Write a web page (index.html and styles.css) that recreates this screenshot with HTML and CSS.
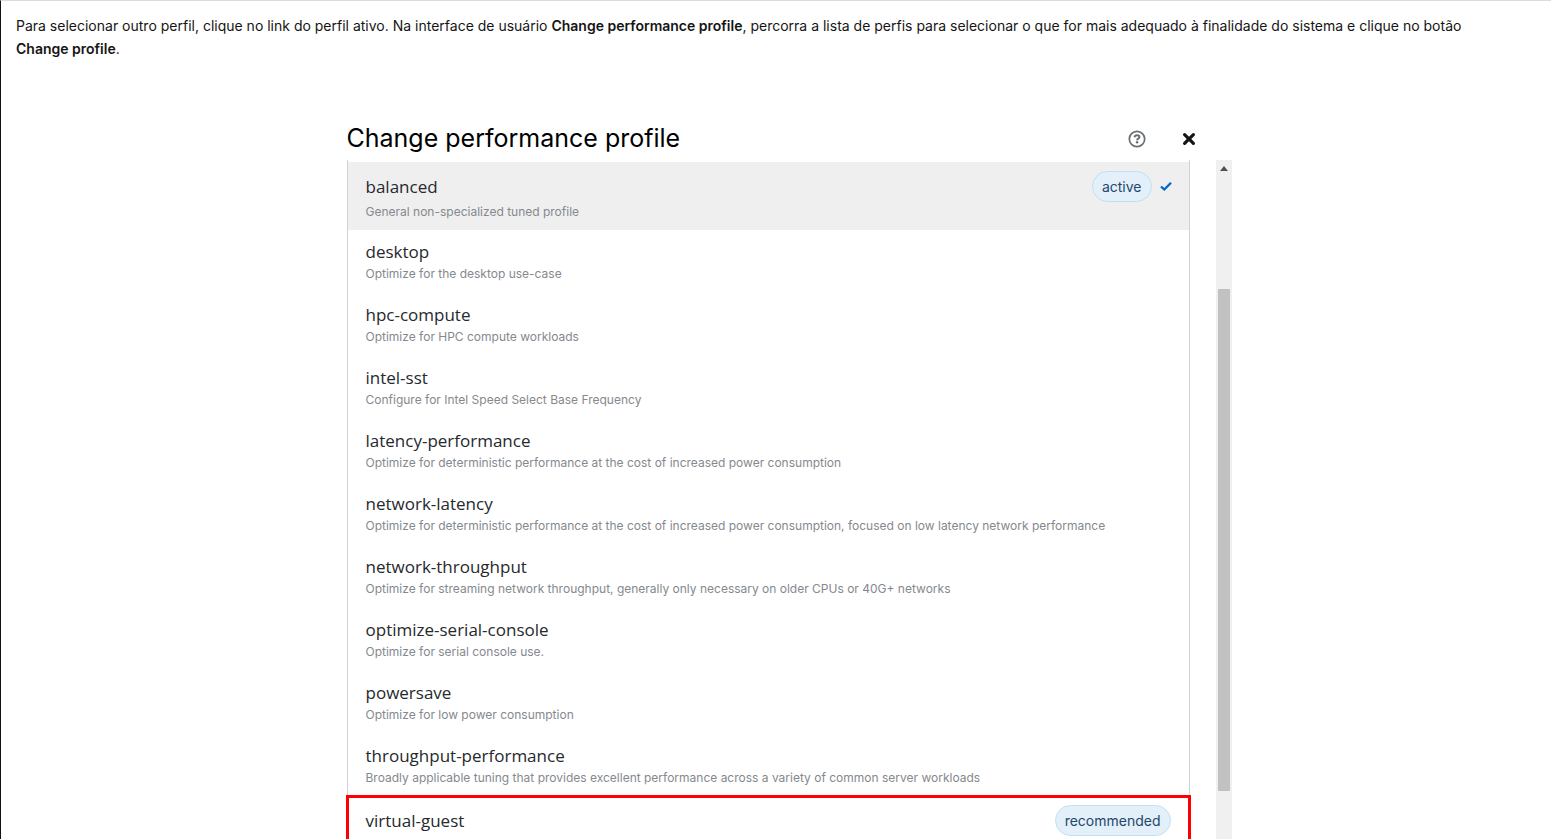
FILE: index.html
```html
<!DOCTYPE html>
<html lang="pt-BR">
<head>
<meta charset="utf-8">
<title>Change performance profile</title>
<link rel="stylesheet" href="styles.css">
</head>
<body>
<main class="page">
  <p class="intro">Para selecionar outro perfil, clique no link do perfil ativo. Na interface de usuário <strong>Change performance profile</strong>, percorra a lista de perfis para selecionar o que for mais adequado à finalidade do sistema e clique no botão <strong>Change profile</strong>.</p>
  <section class="dialog" aria-labelledby="dialog-title">
    <header class="dialog-header">
      <h1 class="dialog-title" id="dialog-title">Change performance profile</h1>
      <button class="icon-button" type="button" aria-label="Help">
        <svg width="18" height="18" viewBox="0 0 18 18" fill="none" stroke="#6a6e73"><circle cx="9" cy="9" r="7.7" stroke-width="1.7"/><path d="M6.500 7.200C6.800 5.700 7.800 5.200 9 5.200c1.400 0 2.500.7 2.500 1.900 0 1.600-2.400 1.500-2.400 3.100" stroke-width="1.900"/><circle cx="9.100" cy="12.300" r="1.200" fill="#6a6e73" stroke="none"/></svg>
      </button>
      <button class="icon-button" type="button" aria-label="Close">
        <svg width="14" height="14" viewBox="0 0 14 14" stroke="#151515" stroke-width="3.200" stroke-linecap="round"><path d="M2.600 2.600l8.800 8.800M11.400 2.600l-8.800 8.800"/></svg>
      </button>
    </header>
    <div class="dialog-body">
      <ul class="profiles">
        <li class="profile profile-active">
          <div class="profile-head"><span class="profile-name">balanced</span><span class="badge">active</span><svg class="check" width="12" height="10" viewBox="0 0 12 10" fill="none" stroke="#06c" stroke-width="2.300"><path d="M1 4.500l3.300 3L11 .8"/></svg></div>
          <p class="profile-text">General non-specialized tuned profile</p>
        </li>
        <li class="profile"><div class="profile-head"><span class="profile-name">desktop</span></div><p class="profile-text">Optimize for the desktop use-case</p></li>
        <li class="profile"><div class="profile-head"><span class="profile-name">hpc-compute</span></div><p class="profile-text">Optimize for HPC compute workloads</p></li>
        <li class="profile"><div class="profile-head"><span class="profile-name">intel-sst</span></div><p class="profile-text">Configure for Intel Speed Select Base Frequency</p></li>
        <li class="profile"><div class="profile-head"><span class="profile-name">latency-performance</span></div><p class="profile-text">Optimize for deterministic performance at the cost of increased power consumption</p></li>
        <li class="profile"><div class="profile-head"><span class="profile-name">network-latency</span></div><p class="profile-text">Optimize for deterministic performance at the cost of increased power consumption, focused on low latency network performance</p></li>
        <li class="profile"><div class="profile-head"><span class="profile-name">network-throughput</span></div><p class="profile-text">Optimize for streaming network throughput, generally only necessary on older CPUs or 40G+ networks</p></li>
        <li class="profile"><div class="profile-head"><span class="profile-name">optimize-serial-console</span></div><p class="profile-text">Optimize for serial console use.</p></li>
        <li class="profile"><div class="profile-head"><span class="profile-name">powersave</span></div><p class="profile-text">Optimize for low power consumption</p></li>
        <li class="profile"><div class="profile-head"><span class="profile-name">throughput-performance</span></div><p class="profile-text">Broadly applicable tuning that provides excellent performance across a variety of common server workloads</p></li>
        <li class="profile profile-marked"><div class="profile-head"><span class="profile-name">virtual-guest</span><span class="badge">recommended</span></div></li>
      </ul>
      <div class="scrollbar" aria-hidden="true">
        <svg class="scroll-arrow" width="8" height="5" viewBox="0 0 8 5"><path d="M0 5l4-5 4 5z" fill="#505050"/></svg>
        <div class="scroll-thumb"></div>
      </div>
    </div>
  </section>
</main>
</body>
</html>
```
FILE: styles.css
```css
* {
  box-sizing: border-box;
}

body {
  margin: 0;
  background: #fff;
  color: #151515;
  font-family: Inter, "Open Sans", sans-serif;
}

.page {
  display: flex;
  flex-direction: column;
  height: 100vh;
  overflow: hidden;
  border-top: 1px solid #dcdcdc;
  border-left: 1px solid #10101a;
}

.intro {
  margin: 0;
  padding: 13px 15px;
  font-size: 14px;
  line-height: 23px;
}

.intro strong {
  font-weight: 600;
  white-space: nowrap;
}

.dialog {
  display: flex;
  flex: 1;
  flex-direction: column;
  align-self: center;
  width: 100%;
  max-width: 913px;
  min-height: 0;
  margin-top: 43px;
  margin-right: 2px;
  padding-left: 28px;
}

.dialog-header {
  display: flex;
  align-items: center;
  gap: 36px;
  height: 44px;
  padding-right: 36px;
  flex: none;
}

.dialog-title {
  flex: 1;
  margin: 0;
  color: #000;
  font-size: 25px;
  font-weight: 400;
  line-height: 40px;
}

.icon-button {
  display: flex;
  margin: 0;
  padding: 2px 0 0;
  border: 0;
  background: none;
}

.dialog-body {
  display: flex;
  flex: 1;
  gap: 26px;
  min-height: 0;
}

.profiles {
  flex: 1;
  margin: 0;
  padding: 2px 0 0;
  border: solid #d2d2d2;
  border-width: 0 1px;
  list-style: none;
}

.profile {
  padding: 9px 17px 9px 18px;
}

.profile-active {
  padding-bottom: 8px;
  background: #efefef;
}

.profile-head {
  display: flex;
  align-items: center;
  gap: 8px;
  line-height: 25px;
}

.profile-name {
  flex: 1;
  color: #26292d;
  font-family: "Open Sans", sans-serif;
  font-size: 17px;
}

.profile-text {
  margin: 0;
  color: #85898e;
  font-size: 12px;
  line-height: 20px;
}

.badge {
  padding: 0 9px;
  border: 1px solid #bee1f4;
  border-radius: 16px;
  background: #e4f0f9;
  color: #23486b;
  font-size: 14px;
  line-height: 29px;
}

.profile-marked {
  height: 80px;
  margin: -2px -2px 0;
  padding: 7px 17px;
  border: 3px solid #f00;
}

.scrollbar {
  display: flex;
  flex-direction: column;
  align-items: center;
  width: 16px;
  background: #f0f0f0;
}

.scroll-arrow {
  flex: none;
  margin-top: 6px;
}

.scroll-thumb {
  width: 12px;
  height: 74%;
  margin-top: 118px;
  background: #c1c1c1;
}
```
